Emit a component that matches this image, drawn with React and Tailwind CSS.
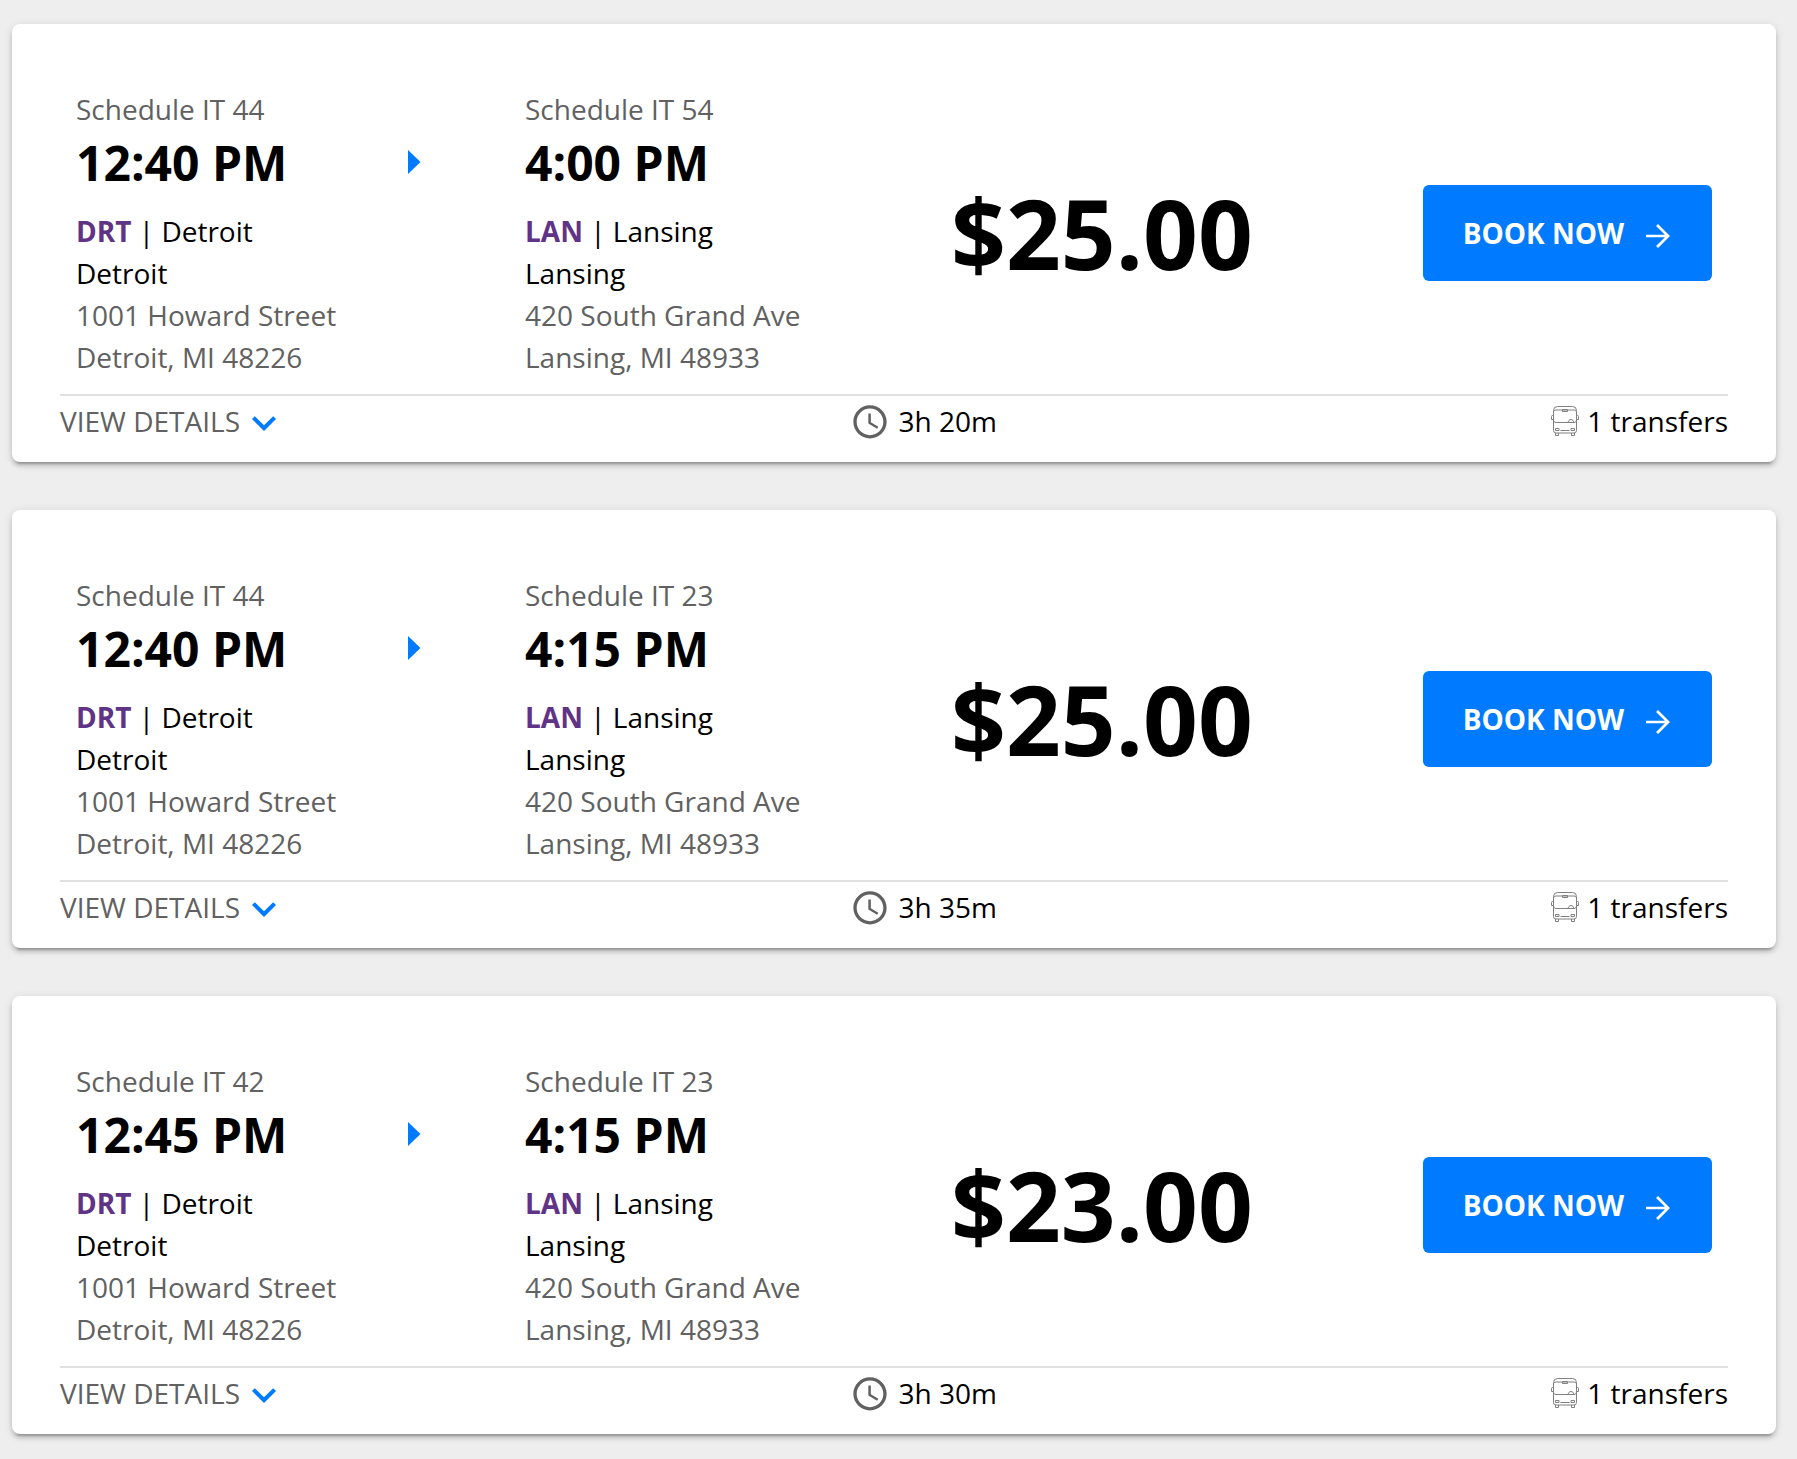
const trips = [
  { id: 1, from: "Schedule IT 44", depart: "12:40 PM", to: "Schedule IT 54", arrive: "4:00 PM", price: "$25.00", duration: "3h 20m" },
  { id: 2, from: "Schedule IT 44", depart: "12:40 PM", to: "Schedule IT 23", arrive: "4:15 PM", price: "$25.00", duration: "3h 35m" },
  { id: 3, from: "Schedule IT 42", depart: "12:45 PM", to: "Schedule IT 23", arrive: "4:15 PM", price: "$23.00", duration: "3h 30m" },
];

function ClockIcon() {
  return (
    <svg aria-hidden="true" viewBox="0 -0.5 24 24" className="size-10 fill-[#616161]">
      <path d="M11.99 2C6.47 2 2 6.48 2 12s4.47 10 9.99 10C17.52 22 22 17.52 22 12S17.52 2 11.99 2zM12 20c-4.42 0-8-3.58-8-8s3.58-8 8-8 8 3.58 8 8-3.58 8-8 8z" />
      <path d="M12.5 7H11v6l5.25 3.15.75-1.23-4.5-2.67z" />
    </svg>
  );
}

function ChevronIcon() {
  return (
    <svg aria-hidden="true" viewBox="0 -1 24 24" className="size-12 fill-[#007bff]">
      <path d="M7.41 8.59 12 13.17l4.59-4.58L18 10l-6 6-6-6z" />
    </svg>
  );
}

function ArrowIcon() {
  return (
    <svg aria-hidden="true" viewBox="0 -2 24 24" className="size-9 fill-white">
      <path d="M12 4l-1.3 1.3L16.6 11.100H4v1.800h12.600l-5.900 5.800L12 20l8-8z" />
    </svg>
  );
}

function BusIcon() {
  return (
    <svg aria-hidden="true" viewBox="0 0 28 32" className="h-8 w-7 fill-none stroke-[#808080] stroke-1">
      <path d="M2.500 5.500a4 4 0 0 1 4-4h15a4 4 0 0 1 4 4v20a2.500 2.500 0 0 1-2.500 2.500H5a2.500 2.500 0 0 1-2.500-2.500z" />
      <path d="M2.500 7.500c0-1.500 1-2.500 2.500-2.500h18c1.500 0 2.500 1 2.500 2.500v7.500c0 1.500-1 2.500-2.500 2.500H5c-1.500 0-2.500-1-2.500-2.500z" />
      <path d="M11.500 4.500h5v2h-5zM17 17.500c.5-2 1.500-3 3-3s2.500 1 2.500 2.500M4.500 23.500h3.500v2H4.500zM20 23.500h3.500v2H20zM9.500 25.500h9" />
      <path d="M2.500 10.500h-1a1 1 0 0 0-1 1v3h2M25.500 10.500h1a1 1 0 0 1 1 1v3h-2M4.500 28v2.500h3V28M20.500 28v2.500h3V28" />
    </svg>
  );
}

function Stop({ schedule, time, code, city, street, region }) {
  return (
    <div className="whitespace-nowrap">
      <p className="text-[#616161]">{schedule}</p>
      <p className="mb-[14px] text-5xl leading-[66px] font-bold">{time}</p>
      <p>
        <strong className="font-bold text-[#5f3385]">{code}</strong> | {city}
      </p>
      <p>{city}</p>
      <address className="text-[#616161] not-italic">
        {street}
        <br />
        {region}
      </address>
    </div>
  );
}

function TripCard({ trip }) {
  return (
    <article className="rounded-lg bg-white px-12 pt-16 pb-4 shadow-[0_6px_2px_-4px_rgba(0,0,0,0.2),0_4px_4px_rgba(0,0,0,0.14),0_2px_10px_rgba(0,0,0,0.12)]">
      <div className="grid grid-cols-[332fr_117fr_426fr_761fr] border-b-2 border-[#e0e0e0] px-4 pb-4">
        <Stop schedule={trip.from} time={trip.depart} code="DRT" city="Detroit" street="1001 Howard Street" region="Detroit, MI 48226" />
        <div className="mt-[42px] flex h-16 items-center">
          <svg aria-hidden="true" viewBox="0 0 13 24" className="h-6 w-[13px] fill-[#007bff]">
            <path d="M0 0l12.500 12L0 24z" />
          </svg>
        </div>
        <Stop schedule={trip.to} time={trip.arrive} code="LAN" city="Lansing" street="420 South Grand Ave" region="Lansing, MI 48933" />
        <div className="flex items-center justify-between">
          <p className="text-8xl leading-[98px] font-bold">{trip.price}</p>
          <button type="button" className="flex h-24 items-center gap-4 rounded-md bg-[#007bff] pr-9 pl-10 font-bold whitespace-nowrap text-white">
            BOOK NOW
            <ArrowIcon />
          </button>
        </div>
      </div>
      <div className="flex h-[50px] items-center justify-between">
        <button type="button" className="flex items-center pr-2 text-[#616161]">
          VIEW DETAILS
          <ChevronIcon />
        </button>
        <p className="flex items-center gap-2">
          <ClockIcon />
          {trip.duration}
        </p>
        <p className="flex items-center gap-2">
          <BusIcon />1 transfers
        </p>
      </div>
    </article>
  );
}

export default function App() {
  return (
    <main className="flex min-h-screen flex-col gap-12 bg-[#eeeeee] py-6 pr-[21px] pl-3 font-['Open_Sans',sans-serif] text-[28px] leading-[42px] text-black">
      {trips.map((trip) => (
        <TripCard key={trip.id} trip={trip} />
      ))}
    </main>
  );
}
